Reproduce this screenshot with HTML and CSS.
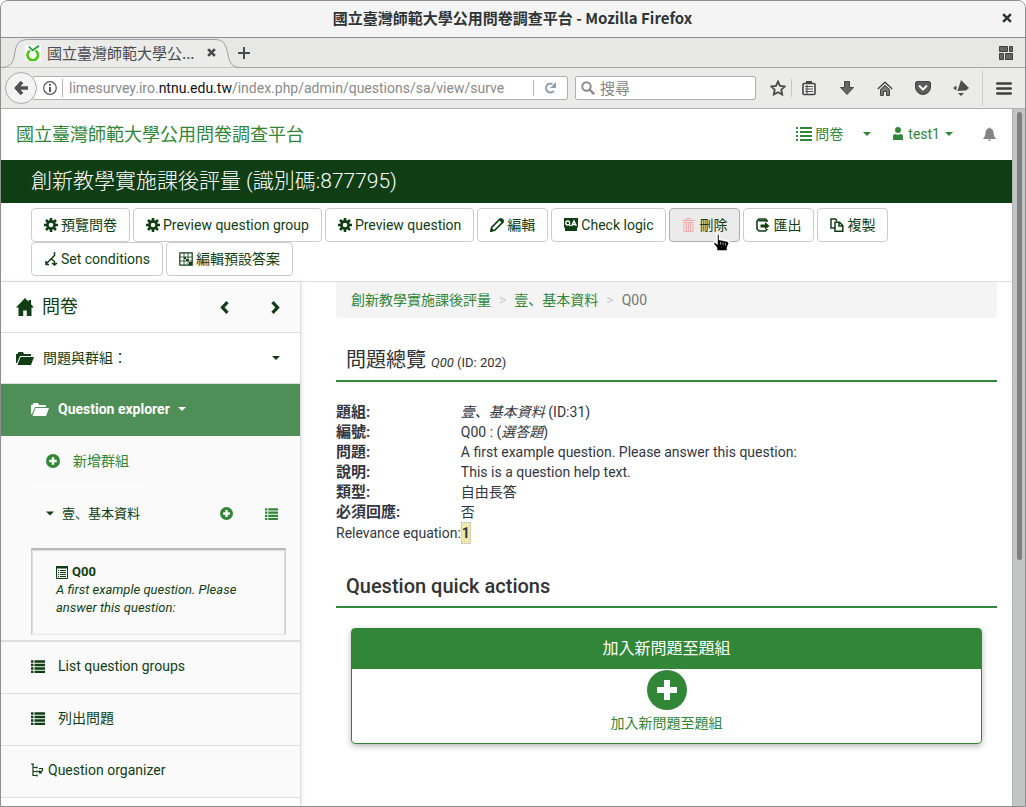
FILE: index.html
```
<!DOCTYPE html>
<html lang="zh-Hant">
<head>
<meta charset="utf-8">
<title>國立臺灣師範大學公用問卷調查平台</title>
<link rel="stylesheet" href="styles.css">
</head>
<body>
<svg class="sprite" aria-hidden="true">
  <symbol id="cog" viewBox="0 0 14 14"><path fill="none" stroke="currentColor" stroke-width="2.6" d="M7 3.4a3.6 3.6 0 1 0 0 7.2a3.6 3.6 0 1 0 0-7.2z"/><path stroke="currentColor" stroke-width="2.6" d="M7 0v3M7 11v3M0 7h3M11 7h3M2 2l2.2 2.2M9.800 9.800L12 12M12 2L9.800 4.200M4.200 9.800L2 12"/></symbol>
  <symbol id="list" viewBox="0 0 16 14"><path stroke="currentColor" stroke-width="2" d="M0 1h2M4 1h12M0 5h2M4 5h12M0 9h2M4 9h12M0 13h2M4 13h12"/></symbol>
  <symbol id="rows" viewBox="0 0 14 13"><path stroke="currentColor" stroke-width="2.500" d="M0 1.500h2.500M3.500 1.500H14M0 5h2.500M3.500 5H14M0 8.500h2.500M3.500 8.500H14M0 12h2.500M3.500 12H14"/></symbol>
  <symbol id="caret" viewBox="0 0 8 4"><path fill="currentColor" d="M0 0h8L4 4z"/></symbol>
  <symbol id="plus" viewBox="0 0 14 14"><path fill="currentColor" fill-rule="evenodd" d="M7 0a7 7 0 1 1 0 14A7 7 0 0 1 7 0zM5.700 3.200v2.500H3.200v2.600h2.500v2.500h2.600V8.300h2.500V5.700H8.300V3.200z"/></symbol>
  <symbol id="home" viewBox="0 0 18 18"><path fill="currentColor" d="M9 0L0 9.500h2.500V18h4.700v-5.500h3.600V18h4.700V9.500H18l-3-3.200V2h-2.500v1.700z"/></symbol>
  <symbol id="folder" viewBox="0 0 18 13"><path fill="currentColor" d="M0 11V2h1.500L2.500 0H7l1 2h7v2H4L1 11zM1.500 13L4.500 5H18l-3 8z"/></symbol>
  <symbol id="chevron" viewBox="0 0 9 13"><path fill="none" stroke="currentColor" stroke-width="3.200" d="M7.500 1.200L2.500 6.500l5 5.300"/></symbol>
</svg>

<div class="window">
  <header class="titlebar">
    <span class="window-title">國立臺灣師範大學公用問卷調查平台 - Mozilla Firefox</span>
    <button class="bare window-close" aria-label="Close window"><svg width="10" height="10" viewBox="0 0 9 9"><path stroke="currentColor" stroke-width="2.200" d="M1 1l7 7M8 1L1 8"/></svg></button>
  </header>

  <div class="tabstrip">
    <div class="tab">
      <svg class="tab-shape" width="240" height="30" viewBox="0 0 240 30"><path fill="#ebebe9" stroke="#9b9fa6" d="M0 29.500C9 29 12 26 13.500 17C15 6 17 1.500 28 1.500H214C223 1.500 225 7 227 17C229 26 231 29.500 240 29.500"/></svg>
      <svg class="favicon" width="16" height="16" viewBox="0 0 16 16"><rect width="16" height="16" fill="#fff"/><path d="M5 5.500A5.300 5.300 0 1 0 10.500 5.500" fill="none" stroke="#4bc80c" stroke-width="2.600"/><path d="M4 1.500l3.500 3.800L14 .7" fill="none" stroke="#23a03c" stroke-width="1.800"/></svg>
      <span class="tab-title">國立臺灣師範大學公...</span>
      <button class="bare tab-close" aria-label="Close tab"><svg width="9" height="9" viewBox="0 0 8 8"><path stroke="currentColor" stroke-width="2.400" d="M1 1l6 6M7 1L1 7"/></svg></button>
    </div>
    <button class="bare new-tab" aria-label="New tab"><svg width="12" height="12" viewBox="0 0 12 12"><path stroke="currentColor" stroke-width="2" d="M6 0v12M0 6h12"/></svg></button>
    <button class="bare tab-groups" aria-label="Tab groups"><svg width="14" height="14" viewBox="0 0 14 14"><path fill="#666" stroke="#3f3f3f" d="M.5.500h8v5h-8zM10.500.500h3v5h-3zM.5 7.500h4v6h-4zM6.500 7.500h7v6h-7z"/></svg></button>
  </div>

  <nav class="navbar">
    <button class="back" aria-label="Back"><svg width="14" height="14" viewBox="0 0 14 14"><path fill="none" stroke="#505355" stroke-width="3.600" d="M8 1L2.500 7L8 13M3 7h11"/></svg></button>
    <div class="urlbar">
      <svg width="14" height="14" viewBox="0 0 14 14"><circle cx="7" cy="7" r="6.300" fill="none" stroke="#555" stroke-width="1.200"/><path stroke="#444" stroke-width="1.800" d="M7 3v1.800M7 6v5"/></svg>
      <div class="url" role="textbox" aria-label="Address" contenteditable="true" spellcheck="false">limesurvey.iro.<b>ntnu.edu.tw</b>/index.php/admin/questions/sa/view/surve</div>
      <button class="bare reload" aria-label="Reload"><svg width="12" height="12" viewBox="0 0 12 12"><path fill="none" stroke="#8f9ead" stroke-width="2" d="M8.500 2.200A4.400 4.400 0 1 0 9.800 8.800"/><path fill="#8f9ead" d="M12 0v6H6z"/></svg></button>
    </div>
    <label class="searchbar">
      <svg width="14" height="14" viewBox="0 0 14 14"><circle cx="5.500" cy="5.500" r="4.200" fill="none" stroke="#8a8a8a" stroke-width="2"/><path stroke="#8a8a8a" stroke-width="2.400" d="M8.500 8.500l4.700 4.700"/></svg>
      <input type="search" placeholder="搜尋" aria-label="搜尋">
    </label>
    <div class="tools">
      <button class="bare" aria-label="Bookmark"><svg width="16" height="16" viewBox="0 0 16 16"><path fill="none" stroke="#4a4a4a" stroke-width="1.800" d="M8 1.500l2 4.300 4.800.6-3.500 3.300.9 4.800L8 12.200l-4.200 2.300.9-4.800L1.200 6.400 6 5.800z"/></svg></button>
      <button class="bare ruled" aria-label="Bookmarks list"><svg width="16" height="16" viewBox="0 0 16 16"><rect x="2" y="3.500" width="12" height="11" rx="1" fill="#f2f2f2" stroke="#444" stroke-width="1.600"/><path d="M5 1h6v3H5z" fill="#444"/><path stroke="#555" d="M4 6.500h8M4 9h8M4 11.500h8"/><path stroke="#444" d="M6 5v9"/></svg></button>
      <button class="bare" aria-label="Downloads"><svg width="16" height="16" viewBox="-1 -1 16 16"><path fill="#666" stroke="#444" d="M4.500.500h5v6h4L7 13.500.500 6.500h4z"/></svg></button>
      <button class="bare" aria-label="Home"><svg width="16" height="15" viewBox="0 0 16 15"><path fill="none" stroke="#484848" stroke-width="1.400" d="M.8 8L8 1.200 15.200 8"/><path fill="#777" stroke="#444" d="M3.500 8.500L8 4.300l4.500 4.200v6H9.500v-4h-3v4h-3z"/></svg></button>
      <button class="bare" aria-label="Pocket"><svg width="16" height="14" viewBox="0 0 16 14"><path fill="#5c5c5c" stroke="#444" d="M1.500.500h13l1 1V6a7.500 7.500 0 0 1-15 0V1.500z"/><path fill="none" stroke="#f4f4f4" stroke-width="2" d="M4 4.500l4 4 4-4"/></svg></button>
      <button class="bare" aria-label="Add-on"><svg width="16" height="16" viewBox="0 0 16 16"><path fill="#4e4e4e" d="M8 0l8 8-3 2.500-8.500.5zM3.500 5.500v5L0 8zM5 13h6l-3 3z"/></svg></button>
      <button class="bare menu" aria-label="Menu"><svg width="16" height="13" viewBox="0 0 16 13"><path stroke="#3f3f3f" stroke-width="2.600" stroke-linecap="round" d="M1.300 1.500h13.400M1.300 6.500h13.400M1.300 11.500h13.400"/></svg></button>
    </div>
  </nav>

  <div class="viewport">
    <div class="page">
      <header class="site-header">
        <a class="brand" href="#">國立臺灣師範大學公用問卷調查平台</a>
        <nav class="site-nav">
          <a class="surveys" href="#"><svg width="16" height="14"><use href="#list"/></svg>問卷</a>
          <button class="bare" aria-label="Surveys menu"><svg width="8" height="4"><use href="#caret"/></svg></button>
          <button class="bare user"><svg width="10" height="13" viewBox="0 0 10 13"><circle cx="5" cy="3" r="3" fill="currentColor"/><path fill="currentColor" d="M0 13V9.500Q0 7 2.500 7Q5 8.500 7.500 7Q10 7 10 9.500V13z"/></svg>test1<svg class="caret" width="8" height="4"><use href="#caret"/></svg></button>
          <button class="bare bell" aria-label="Notifications"><svg width="13" height="14" viewBox="0 0 13 14"><path fill="currentColor" d="M5.500 1.500a1 1 0 0 1 2 0Q10.500 2.200 10.500 6Q10.500 9.500 13 12H0Q2.500 9.500 2.500 6Q2.500 2.200 5.500 1.500zM5 12.500h3Q7.500 14 6.500 14T5 12.500z"/></svg></button>
        </nav>
      </header>

      <h1 class="survey-title">創新教學實施課後評量 (識別碼:877795)</h1>

      <div class="toolbar">
        <button class="btn"><svg width="14" height="14"><use href="#cog"/></svg>預覽問卷</button>
        <button class="btn"><svg width="14" height="14"><use href="#cog"/></svg>Preview question group</button>
        <button class="btn"><svg width="14" height="14"><use href="#cog"/></svg>Preview question</button>
        <button class="btn"><svg width="14" height="14" viewBox="0 0 14 14"><path fill="none" stroke="currentColor" stroke-width="1.700" d="M1 13l.7-3.700L9.500 1.500Q11.500.5 12.500 1.500T12.500 4.500L4.700 12.300z"/><path fill="currentColor" d="M0 14l1.200-4.500 3.300 3.300zM8.500 1.500L10.500 0l3.500 3.500-1.500 2z"/></svg>編輯</button>
        <button class="btn"><svg width="14" height="14" viewBox="0 0 14 14"><path fill="currentColor" d="M0 0h14v9.500h-1V13H1V9.500H0z"/><path fill="none" stroke="#fff" stroke-width="1.300" d="M3.700 3a2 2 0 1 0 0 4a2 2 0 1 0 0-4M5 6.500L6.500 8M7.500 8L10 2.700 12.400 8M8.500 6.500h3"/></svg>Check logic</button>
        <button class="btn hovered"><svg class="trash" width="14" height="14" viewBox="0 0 14 14"><path fill="none" stroke="currentColor" d="M0 2.500h13M4.500 2V.500h4V2M2 4.500h9v9H2zM4.500 5v8M6.500 5v8M8.500 5v8"/></svg>刪除</button>
        <button class="btn"><svg width="14" height="14" viewBox="0 0 14 14"><path fill="none" stroke="currentColor" stroke-width="1.600" d="M11 4V2.500L9.500 1H3L1 3v8l2 2h6.500l1.500-1.500V11"/><path fill="currentColor" d="M4.500 6.500H9V4l4.500 4L9 11.500V9.500H4.500zM2.500 2h8v1.500h-8z"/></svg>匯出</button>
        <button class="btn"><svg width="14" height="14" viewBox="0 0 14 14"><path fill="none" stroke="currentColor" stroke-width="1.500" d="M5 10H1V1h4.500L7 3M5 4.200h4.500l3.300 3.300v5.700H5zM9 4.500V8h3.500"/></svg>複製</button>
        <button class="btn"><svg width="14" height="14" viewBox="0 0 14 14"><path fill="none" stroke="currentColor" stroke-width="1.500" d="M10.500 0v3.500L2 12M7 6.500l3.500 3V13M2 9v3.500h3M8 11l2.500 2L13 11"/></svg>Set conditions</button>
        <button class="btn"><svg width="14" height="14" viewBox="0 0 14 14"><path fill="none" stroke="currentColor" stroke-width="1.200" d="M1 .8h12.200v12.400H.800V1z"/><path fill="none" stroke="currentColor" stroke-width=".8" d="M1 5h12M1 9h12M5 1v12M9 1v12"/><path fill="currentColor" d="M5 5h2v2H5zM7 7h2.500v2H7zM10 10h3v3h-3z"/></svg>編輯預設答案</button>
      </div>

      <div class="columns">
        <aside class="sidebar">
          <div class="side-head">
            <a class="side-home" href="#"><svg width="18" height="18"><use href="#home"/></svg>問卷</a>
            <div class="side-arrows">
              <button class="bare" aria-label="Collapse"><svg width="9" height="13"><use href="#chevron"/></svg></button>
              <button class="bare" aria-label="Expand"><svg class="flip" width="9" height="13"><use href="#chevron"/></svg></button>
            </div>
          </div>
          <button class="bare side-section"><svg width="18" height="13"><use href="#folder"/></svg><span>問題與群組：</span><svg width="8" height="4"><use href="#caret"/></svg></button>
          <button class="bare explorer"><svg width="18" height="13"><use href="#folder"/></svg><span>Question explorer</span><svg width="8" height="4"><use href="#caret"/></svg></button>
          <div class="tree">
            <a class="add-group" href="#"><svg width="14" height="14"><use href="#plus"/></svg>新增群組</a>
            <div class="group">
              <button class="bare group-name"><svg width="8" height="5"><use href="#caret"/></svg>壹、基本資料</button>
              <a class="group-add" href="#" aria-label="Add question"><svg width="13" height="13"><use href="#plus"/></svg></a>
              <a class="group-list" href="#" aria-label="List questions"><svg width="13" height="12"><use href="#rows"/></svg></a>
            </div>
            <a class="question" href="#">
              <strong><svg width="12" height="13" viewBox="0 0 12 13"><path fill="none" stroke="currentColor" d="M.5 1h11v11.500H.500zM2 4.500h1M4 4.500h6M2 6.500h1M4 6.500h6M2 8.500h1M4 8.500h6M2 10.500h1M4 10.500h6"/><path fill="currentColor" d="M0 0h12v2.500H0z"/></svg>Q00</strong>
              <em>A first example question. Please answer this question:</em>
            </a>
          </div>
          <a class="side-link" href="#"><svg width="14" height="13"><use href="#rows"/></svg>List question groups</a>
          <a class="side-link" href="#"><svg width="14" height="13"><use href="#rows"/></svg>列出問題</a>
          <a class="side-link organizer" href="#"><svg width="13" height="14" viewBox="0 0 13 14"><path fill="none" stroke="currentColor" stroke-width="1.200" d="M0 1h3M2 1v12M2 4.500h4M2 8.500h4M2 12.500h4M6 3.500v2M6 7.500v2M6 11.500v2M8 5.500h3.500v2L8.500 10M8.500 7.500V10H11M7 8.500h4"/></svg>Question organizer</a>
        </aside>

        <main class="content">
          <ol class="breadcrumb">
            <li><a href="#">創新教學實施課後評量</a></li>
            <li><a href="#">壹、基本資料</a></li>
            <li>Q00</li>
          </ol>
          <h2 class="heading">問題總覽 <small><em>Q00</em> (ID: 202)</small></h2>
          <table class="summary">
            <tr><th>題組:</th><td><em>壹、基本資料</em> (ID:31)</td></tr>
            <tr><th>編號:</th><td>Q00 : (<em>選答題</em>)</td></tr>
            <tr><th>問題:</th><td>A first example question. Please answer this question:</td></tr>
            <tr><th>說明:</th><td>This is a question help text.</td></tr>
            <tr><th>類型:</th><td>自由長答</td></tr>
            <tr><th>必須回應:</th><td>否</td></tr>
            <tr><th class="plain">Relevance equation:</th><td><span class="equation">1</span></td></tr>
          </table>
          <h2 class="heading actions">Question quick actions</h2>
          <section class="card">
            <h3>加入新問題至題組</h3>
            <a href="#"><svg width="40" height="40" viewBox="0 0 40 40"><circle cx="20" cy="20" r="20" fill="currentColor"/><path stroke="#fff" stroke-width="6" d="M20 10v20M10 20h20"/></svg>加入新問題至題組</a>
          </section>
        </main>
      </div>
    </div>
    <div class="scrollbar"><div class="thumb"></div></div>
  </div>
</div>

<svg class="pointer" width="18" height="19" viewBox="0 0 18 19"><path fill="#000" stroke="#fff" stroke-width="1.500" d="M5 1.500Q6.500 0 7.500 2V6.500l8 1.500Q17.500 9 17 11L15.500 14.500V18H4.500V15L1.500 11Q1 8.500 3 9L5 10.500z"/><path stroke="#999" d="M8.500 9v2.500M11 9.500v2.500M13.500 10v2.500"/></svg>
</body>
</html>
```
FILE: styles.css
```
* { box-sizing: border-box; }
body {
  margin: 0;
  font: 14px/20px Roboto, "Noto Sans CJK JP", sans-serif;
  font-feature-settings: "locl" 0;
  color: #333641;
}
svg { flex: none; display: block; }
a { color: inherit; text-decoration: none; }
h1, h2, h3, ol { margin: 0; padding: 0; font-weight: 400; }
.sprite { position: absolute; width: 0; height: 0; }
.bare {
  padding: 0;
  border: 0;
  background: none;
  font: inherit;
  font-feature-settings: inherit;
  color: inherit;
  display: flex;
  align-items: center;
}

/* browser window */
.window {
  height: 100vh;
  display: flex;
  flex-direction: column;
  overflow: hidden;
  border: 1px solid #8d8d8d;
  border-radius: 8px 8px 0 0;
  background: #ebebe9;
  font-family: "Noto Sans CJK JP", sans-serif;
}
.titlebar {
  display: flex;
  align-items: center;
  flex: none;
  height: 37px;
  padding: 0 13px 2px 0;
  background: #f4f4f4;
  border-bottom: 1px solid #8d8e8b;
  color: #2e3436;
}
.window-title {
  flex: 1;
  padding-left: 22px;
  text-align: center;
  font-size: 15px;
  font-weight: 700;
}
.tabstrip {
  display: flex;
  align-items: center;
  flex: none;
  height: 30px;
  padding-right: 12px;
  background: #e7e7e5;
  border-bottom: 1px solid #a4a4a0;
  color: #484c4e;
  font-size: 15px;
}
.tab {
  position: relative;
  display: flex;
  align-items: center;
  width: 237px;
  height: 30px;
  padding: 0 22px 0 24px;
}
.tab-shape { position: absolute; left: 0; top: 0; }
.favicon, .tab-title, .tab-close { position: relative; }
.tab-title { flex: 1; margin-left: 6px; white-space: nowrap; }
.tab-groups { margin-left: auto; }
.navbar {
  display: flex;
  align-items: center;
  flex: none;
  height: 41px;
  padding: 0 13px 0 4px;
  border-bottom: 1px solid #b0b0ac;
}
.back {
  z-index: 1;
  display: flex;
  align-items: center;
  justify-content: center;
  width: 32px;
  height: 32px;
  padding: 0;
  border: 1px solid #aaaaa8;
  border-radius: 50%;
  background: #f4f4f4;
}
.urlbar, .searchbar {
  display: flex;
  align-items: center;
  height: 24px;
  background: #fff;
  border: 1px solid #b0b0ac;
  border-radius: 2px;
}
.urlbar { flex: 1 1 0; margin-left: -5px; padding: 0 11px 0 10px; min-width: 0; }
.url {
  flex: 1 1 0;
  min-width: 0;
  margin: 0 20px 0 5px;
  padding-left: 6px;
  border-left: 1px solid #b5b5b5;
  line-height: 18px;
  overflow: hidden;
  white-space: nowrap;
  font-family: Roboto, sans-serif;
  font-size: 14px;
  color: #8a8a8a;
}
.url b { font-weight: 400; color: #111; }
.reload { height: 16px; padding-left: 10px; border-left: 1px solid #b5b5b5; }
.searchbar { width: 181px; margin: 0 14px 0 7px; padding-left: 5px; }
.searchbar input {
  min-width: 0;
  flex: 1;
  padding: 0 5px;
  border: 0;
  outline: 0;
  background: none;
  font: inherit;
  font-size: 15px;
}
.searchbar input::placeholder { color: #858585; }
.tools { display: flex; align-items: center; gap: 22px; }
.tools .ruled { margin-left: -17px; padding-left: 9px; height: 18px; border-left: 1px solid #c4c4c2; }
.tools .menu { margin-left: -9px; padding-left: 13px; height: 36px; border-left: 1px solid #d0d0ce; }

/* page */
.viewport { flex: 1; min-height: 0; display: flex; background: #fff; }
.page {
  flex: 1;
  min-width: 0;
  overflow: hidden;
  display: flex;
  flex-direction: column;
  font-family: Roboto, "Noto Sans CJK JP", sans-serif;
}
.scrollbar { width: 13px; padding: 3px 3px 0 4px; background: #c3c5c4; border-left: 1px solid #b2b4b3; }
.thumb { height: 448px; border-radius: 3px; background: #7c8080; }
.site-header {
  display: flex;
  align-items: center;
  justify-content: space-between;
  flex: none;
  height: 51px;
  padding: 0 16px 0 15px;
  color: #328637;
}
.brand { font-size: 18px; }
.site-nav { display: flex; align-items: center; padding-bottom: 2px; }
.surveys { display: flex; align-items: center; gap: 3px; margin-right: 20px; }
.user { margin: 0 30px 0 22px; gap: 5px; }
.bell { color: #848484; }
.survey-title {
  flex: none;
  height: 43px;
  padding-left: 30px;
  background: #103e14;
  color: #fff;
  font-size: 21px;
  font-weight: 300;
  line-height: 43px;
}
.toolbar {
  display: flex;
  flex-wrap: wrap;
  flex: none;
  column-gap: 3px;
  padding: 5px 96px 5px 30px;
  border-bottom: 1px solid #dedede;
}
.btn {
  display: flex;
  align-items: center;
  gap: 3px;
  height: 34px;
  padding: 0 12px;
  border: 1px solid #ccc;
  border-radius: 4px;
  background: #fff;
  color: #103e14;
  font: inherit;
  white-space: nowrap;
}
.btn.hovered { background: #ebebeb; border-color: #adadad; }
.trash { color: #efabab; }
.columns { display: flex; flex: 1; min-height: 0; }

/* sidebar */
.sidebar {
  flex: none;
  width: 300px;
  border-right: 1px solid #dedede;
  box-shadow: 1px 0 4px #0000001a;
  color: #103e14;
}
.side-head {
  display: flex;
  align-items: stretch;
  justify-content: space-between;
  height: 51px;
  padding-left: 15px;
  border-bottom: 1px solid #dedede;
}
.side-home { display: flex; align-items: center; gap: 8px; font-size: 18px; }
.side-arrows {
  display: flex;
  align-items: center;
  justify-content: space-between;
  width: 100px;
  padding: 0 20px;
  background: #fafafa;
}
.flip { transform: scaleX(-1); }
.side-section { width: 100%; height: 51px; padding: 0 20px 0 15px; border-bottom: 1px solid #dedede; }
.side-section span { flex: 1; margin-left: 9px; text-align: left; }
.explorer {
  width: 100%;
  height: 52px;
  padding: 0 0 2px 30px;
  gap: 8px;
  background: #4f8f57;
  color: #fff;
  font-weight: 700;
}
.explorer span { margin-left: 1px; }
.tree {
  padding: 0 14px 5px 30px;
  background: #fafafa;
  border-bottom: 2px solid #dedede;
}
.add-group {
  display: flex;
  align-items: center;
  gap: 13px;
  width: 113px;
  height: 51px;
  padding-left: 15px;
  border-bottom: 1px solid #fff;
  color: #328637;
}
.group { display: flex; align-items: center; height: 61px; padding: 0 8px 8px 15px; color: #328637; }
.group-name { flex: 1; gap: 8px; font-size: 13px; color: #103e14; }
.group-list { margin-left: 32px; }
.question {
  display: block;
  height: 87px;
  padding: 13px 40px 0 24px;
  border: 1px solid #ccc;
  border-top: 2px solid #b8b8b8;
  border-bottom-color: #e8e8e8;
  box-shadow: inset 1px 1px 1px #ddd, inset -1px 0 1px #ddd;
  font-size: 13px;
  line-height: 18px;
}
.question strong { display: flex; align-items: center; gap: 4px; }
.question em { display: block; }
.side-link {
  display: flex;
  align-items: center;
  gap: 13px;
  height: 52px;
  padding: 0 0 3px 30px;
  background: #fafafa;
  border-bottom: 1px solid #dedede;
}
.side-link.organizer { gap: 4px; }

/* content */
.content { flex: 1; min-width: 0; padding: 0 15px 0 35px; }
.breadcrumb {
  display: flex;
  padding: 8px 15px;
  background: #f4f4f4;
  border-radius: 0 0 4px 4px;
  list-style: none;
  color: #777;
}
.breadcrumb a { color: #328637; }
.breadcrumb li + li::before { content: ">"; padding: 0 8px; color: #ccc; }
.heading {
  margin: 21px 0 20px;
  padding: 6px 10px 5px;
  border-bottom: 2px solid #328637;
  font-size: 20px;
  line-height: 30px;
  color: #333;
}
.heading small { font-size: 13px; line-height: 1; }
.heading.actions { font-weight: 500; }
.summary { border-collapse: collapse; }
.summary th { width: 124px; padding: 0; text-align: left; font-size: 15px; font-weight: 700; }
.summary th.plain { font-size: 14px; font-weight: 400; white-space: nowrap; }
.summary td { padding: 0; }
.equation { display: inline-block; border: 1px dotted #bbb; background: #eee8aa; font-weight: 700; }
.card {
  margin: 0 15px;
  border: 1px solid #328637;
  border-radius: 4px;
  box-shadow: 0 2px 6px #0000004d;
  text-align: center;
}
.card h3 { height: 40px; background: #328637; color: #fff; font-size: 16px; line-height: 40px; }
.card a {
  display: flex;
  flex-direction: column;
  align-items: center;
  gap: 3px;
  padding: 1px 0 10px;
  color: #328637;
}
.pointer { position: absolute; left: 712px; top: 233px; }
```
